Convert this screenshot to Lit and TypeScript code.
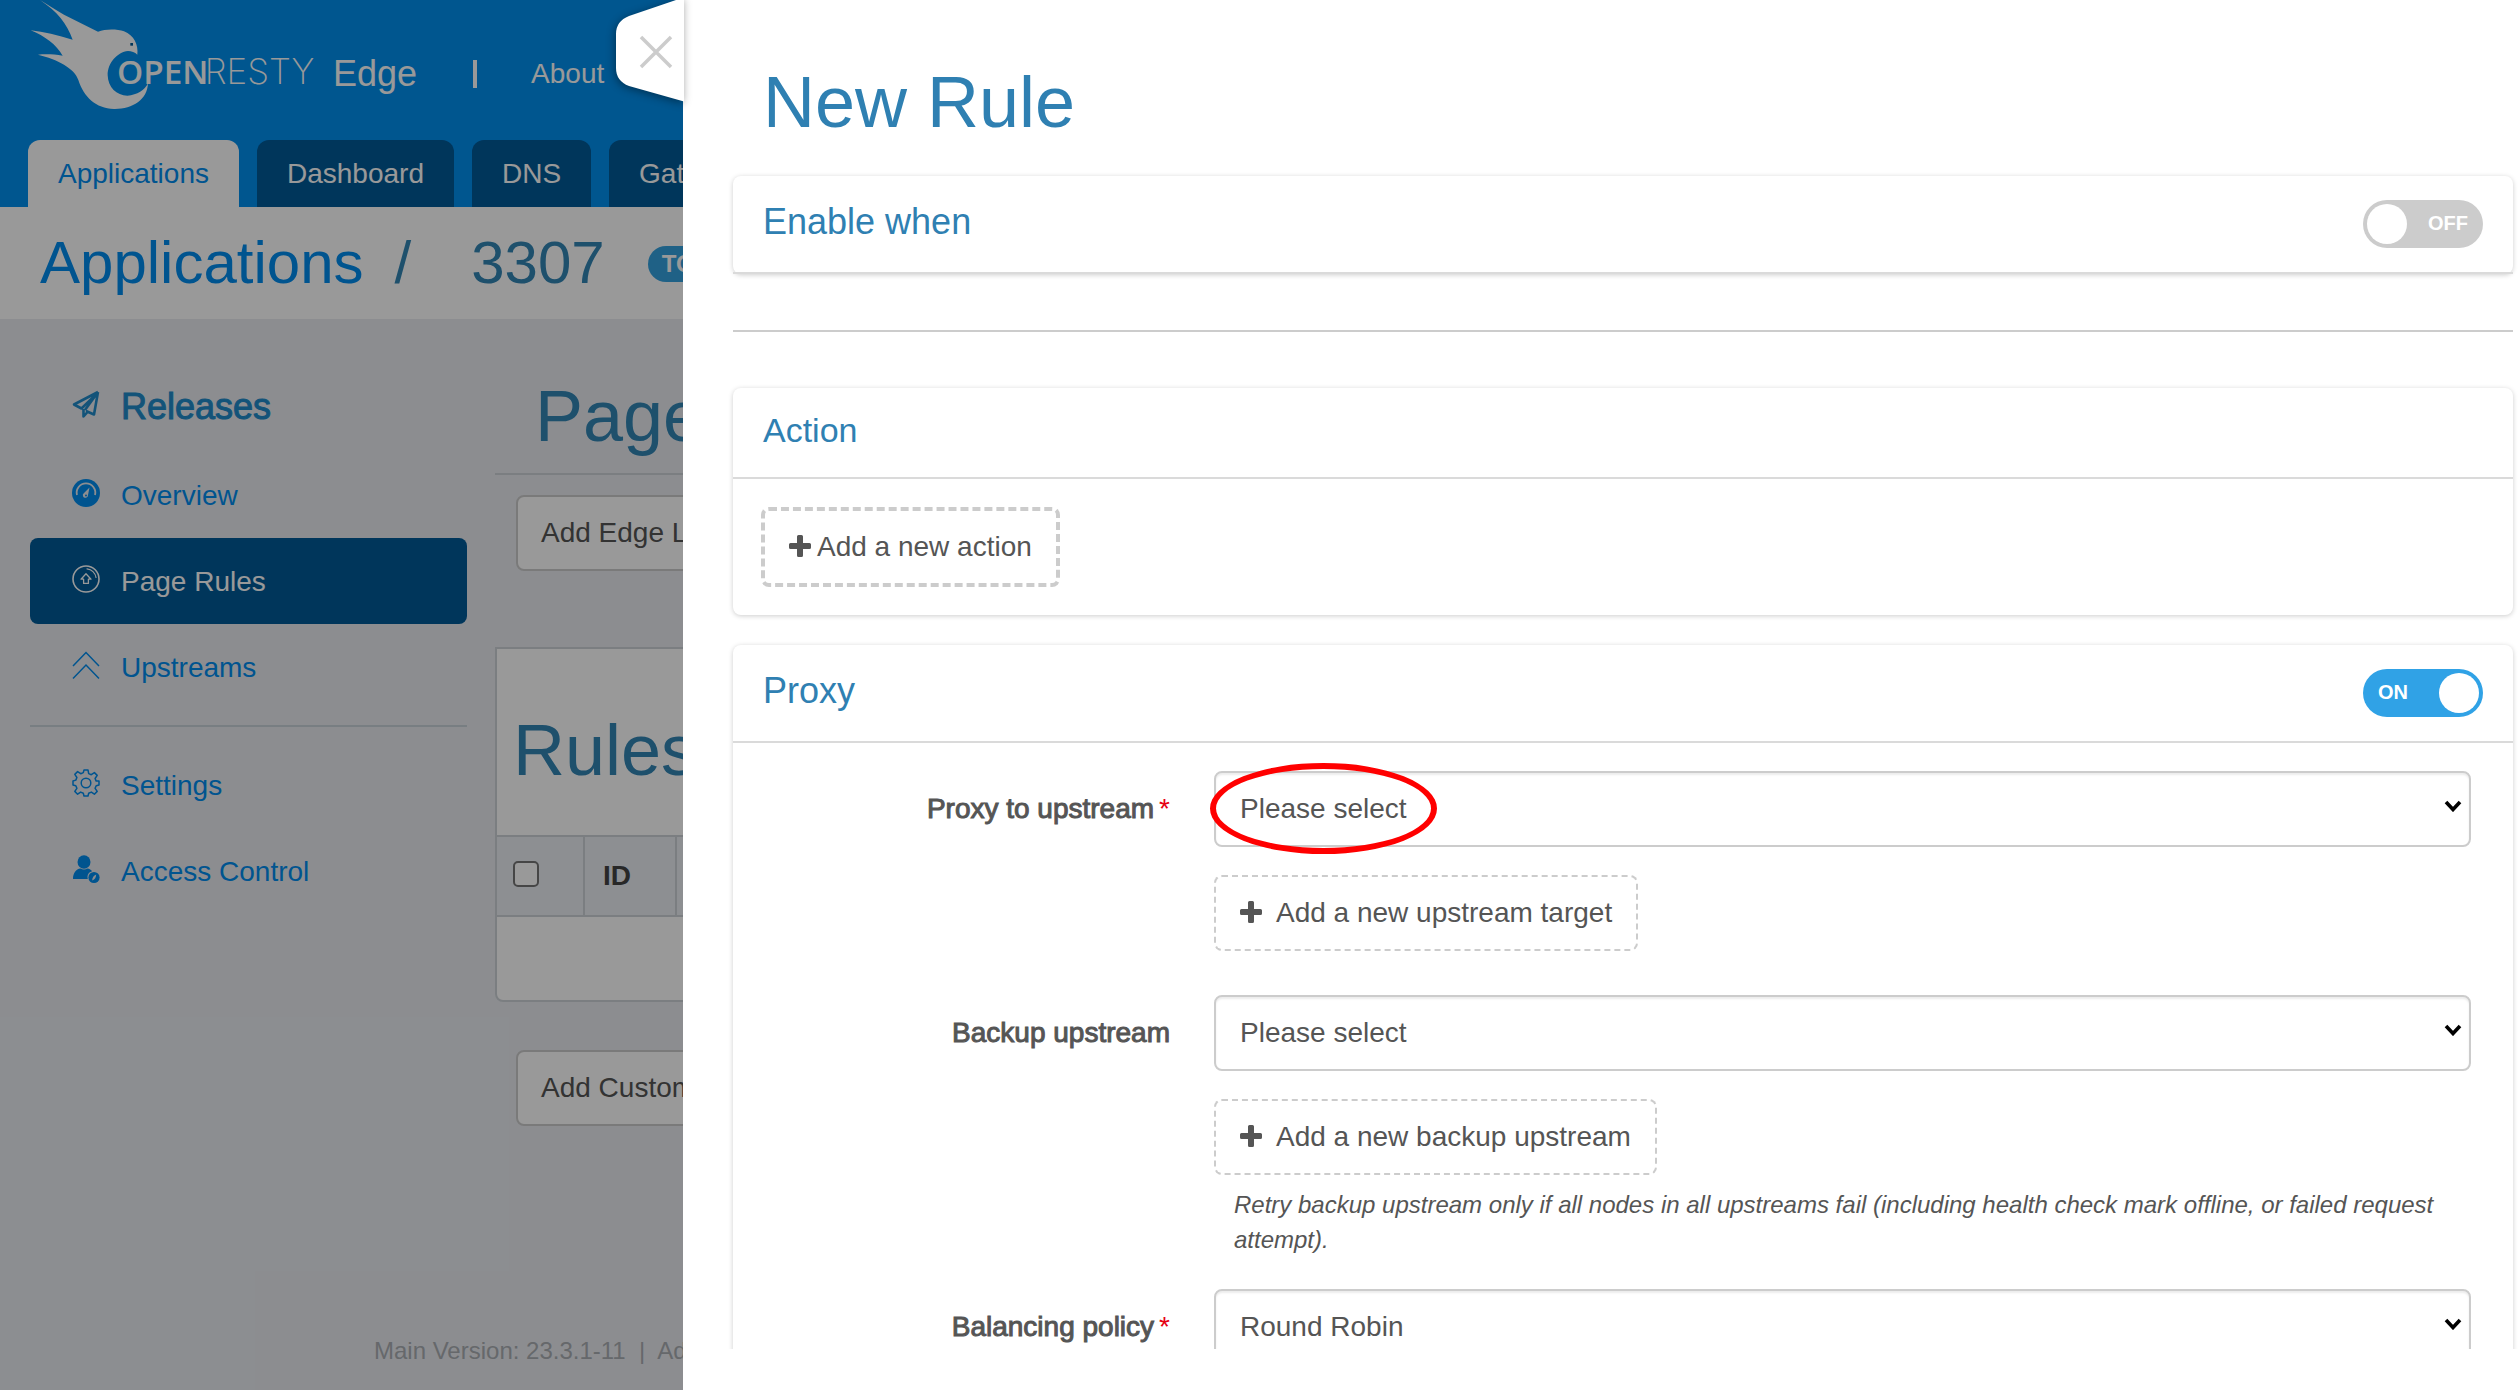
import { LitElement, html, css, svg, nothing, TemplateResult } from "lit";
import { customElement, property } from "lit/decorators.js";

const FONT = css`"Liberation Sans", Arial, Helvetica, sans-serif`;

const icons: Record<string, TemplateResult> = {
  releases: svg`
    <path d="M26 2 2 14.5l7.5 4L23 5.5M26 2l-4 22.5-8-3.5M26 2 13 20M11.5 19v7.5l4.5-5"
      fill="none" stroke="currentColor" stroke-width="2.6" stroke-linejoin="round" />`,
  overview: svg`
    <circle cx="14" cy="14" r="14" fill="currentColor" />
    <path d="M5 16a9.3 9.3 0 1 1 18 0" fill="none" stroke="#e9ecf1" stroke-width="1.8" />
    <path d="M17.5 8.5 12 14a2.6 2.6 0 1 0 4 2z" fill="#e9ecf1" />
    <circle cx="14" cy="16.4" r="1" fill="currentColor" />`,
  rules: svg`
    <g fill="none" stroke="currentColor" stroke-linejoin="round" stroke-linecap="round">
      <circle cx="14" cy="14" r="13" stroke-width="1.6" />
      <path d="M15 3.8A10.2 10.2 0 0 1 24 12.5" stroke-width="1.2" />
      <path d="M14 8.8l5 5.4h-2.6v4.2h-4.8v-4.2H9z" stroke-width="1.3" />
    </g>`,
  upstreams: svg`
    <path d="M1 15 14 1.500 27 15M1 27.500 14 14 27 27.500" fill="none" stroke="currentColor" stroke-width="1.500" />`,
  settings: svg`
    <g fill="none" stroke="currentColor" stroke-width="1.500" stroke-linejoin="round">
      <path d="M12 1h4l.7 3.600 2.600 1.100 3.100-2.100 2.800 2.800-2.100 3.100 1.100 2.600L27 12v4l-2.800.7-1.100 2.600 2.100 3.100-2.800 2.800-3.100-2.100-2.600 1.100L16 27h-4l-.7-2.800-2.600-1.100-3.100 2.100-2.800-2.800 2.100-3.100-1.100-2.600L1 16v-4l2.800-.9 1.100-2.600-2.100-3.100 2.800-2.800 3.100 2.100 2.600-1.100z" />
      <circle cx="14" cy="14" r="4.800" />
    </g>`,
  access: svg`
    <ellipse cx="12" cy="7" rx="6.500" ry="6.800" fill="currentColor" />
    <path d="M1 24c0-6 3-10 7.500-10.500 2 1.400 5 1.400 7 0 2 .3 3.600 1.300 4.600 2.800-3.400.8-5.300 4-4.300 7.700z" fill="currentColor" />
    <circle cx="22" cy="22.500" r="5.600" fill="currentColor" />
    <path d="M20.200 25.500c0-3 1.500-5 4-6-.2 3-1.200 4.800-4 6z" fill="#e9ecf1" />`,
};

const plus = html`<svg class="plus" viewBox="0 0 22 22" aria-hidden="true">
  <path d="M9.500 0h3q1.500 0 1.500 1.500V8h6.500Q22 8 22 9.500v3q0 1.500-1.500 1.500H14v6.500q0 1.500-1.500 1.500h-3Q8 22 8 20.500V14H1.500Q0 14 0 12.500v-3Q0 8 1.500 8H8V1.500Q8 0 9.500 0z" fill="currentColor" />
</svg>`;

@customElement("edge-page")
class EdgePage extends LitElement {
  static styles = css`
    :host {
      display: flex;
      flex-direction: column;
      min-height: 100vh;
      background: #e9ecf1;
      color: #555;
      font: 28px/40px ${FONT};
    }
    * { box-sizing: border-box; }
    a { color: #008cef; text-decoration: none; }
    h1, h2 { margin: 0; font-weight: 400; color: #3285b5; }
    .top { background: #008fee; }
    .brand { display: flex; align-items: center; height: 140px; padding-left: 24px; color: #fff; }
    .logo { width: 300px; height: 115px; align-self: flex-start; }
    .open { font: 600 100px "Open Sans", sans-serif; }
    .resty { font: 200 105px Inter, sans-serif; }
    .product { margin: 8px 0 0 9px; font-size: 36px; }
    .bar { width: 4px; height: 28px; margin: 8px 54px 0 56px; background: #fff; }
    .about { margin-top: 8px; color: #fff; }
    .tabs { display: flex; gap: 18px; padding-left: 28px; overflow: hidden; }
    .tab { padding: 14px 30px 13px; background: #005a98; color: #fff; border-radius: 12px 12px 0 0; white-space: nowrap; }
    .tab.on { background: #fff; color: #008cef; }
    .crumbs { display: flex; align-items: center; height: 112px; padding-left: 40px; background: #fff; font-size: 60px; line-height: 80px; }
    .crumbs h1 { font-size: 60px; }
    .slash { margin: 0 60px 0 31px; color: #3285b5; }
    .badge { margin: 2px 0 0 43px; padding: 0 14px; background: #35a2e0; color: #fff; border-radius: 18px; font-size: 24px; line-height: 36px; font-weight: 700; }
    .columns { display: flex; gap: 28px; }
    .side { width: 467px; padding: 44px 0 0 30px; flex: none; }
    .item { display: flex; align-items: center; gap: 21px; height: 86px; padding: 2px 0 0 42px; border-radius: 8px; }
    .item.lead { margin-bottom: 3px; font-size: 36px; color: #208bca; -webkit-text-stroke: 1px currentColor; }
    .item.on { background: #005a98; color: #fff; }
    .icon { width: 28px; height: 28px; flex: none; margin-bottom: 6px; overflow: visible; }
    .rule { height: 2px; margin: 15px 0; border: 0; background: #c9d2d9; }
    .main { flex: 1; min-width: 0; }
    .heading { padding: 57px 0 17px 40px; border-bottom: 2px solid #cdd3d8; font-size: 72px; line-height: 80px; }
    .btn { height: 76px; padding: 0 23px; background: #fff; color: #555; border: 2px solid #ccc; border-radius: 8px; font: 28px/40px ${FONT}; }
    .first { margin: 20px 0 76px 21px; }
    .last { margin: 48px 0 0 21px; }
    .panel { border: 2px solid #cdd3d8; border-radius: 0 0 8px 8px; background: #fff; }
    .panel-title { padding: 61px 0 45px 16px; font-size: 72px; line-height: 80px; }
    .grid { width: 100%; border-collapse: collapse; table-layout: fixed; }
    .grid th { height: 80px; padding: 0 0 0 18px; background: #ebeef4; border: solid #cdd3d8; border-width: 2px 2px 2px 0; text-align: left; color: #444; }
    .grid th:last-child { border-right: 0; }
    .pick { width: 87px; }
    .num { width: 92px; }
    .grid td { height: 84px; padding: 0; }
    .check { display: block; appearance: none; width: 26px; height: 26px; margin: 0 0 4px -2px; border: 2px solid #767676; border-radius: 5px; background: #fff; }
    .foot { margin-top: auto; padding: 0 0 24px 374px; font-size: 24px; line-height: 30px; color: #aaaeb3; white-space: pre; }
  `;

  private item(name: string, label: string, mod = "") {
    return html`<a class="item ${mod}" href="#">
      <svg class="icon" viewBox="0 0 28 28" aria-hidden="true">${icons[name]}</svg>${label}</a>`;
  }

  render() {
    return html`
      <header class="top">
        <div class="brand">
          <svg class="logo" viewBox="0 0 900 345" role="img" aria-label="OpenResty">
            <path fill="#fff" d="M48 0C70 14 95 30 120 44L222 95C245 86 280 87 300 94C330 106 344 135 340 164C333 157 322 153 312 153C280 156 250 190 251 226C252 262 278 287 310 287C340 285 362 270 372 250C370 300 325 328 270 327C215 325 180 292 163 240C152 205 100 178 42 164C65 162 92 163 116 167C98 135 62 108 20 91C60 96 100 105 146 119C128 70 100 35 48 0Z" />
            <rect x="319" y="129" width="8" height="8" fill="#005a98" />
            <text class="open" x="279" y="252" fill="#fff">OPEN</text>
            <text class="resty" x="542" y="252" fill="#fff">RESTY</text>
          </svg>
          <span class="product">Edge</span>
          <span class="bar"></span>
          <a class="about" href="#">About</a>
        </div>
        <nav class="tabs">
          <a class="tab on" href="#">Applications</a>
          <a class="tab" href="#">Dashboard</a>
          <a class="tab" href="#">DNS</a>
          <a class="tab" href="#">Gateway</a>
        </nav>
      </header>
      <div class="crumbs">
        <a href="#">Applications</a><span class="slash">/</span><h1>3307</h1>
        <span class="badge">TODO</span>
      </div>
      <div class="columns">
        <nav class="side">
          ${this.item("releases", "Releases", "lead")}
          ${this.item("overview", "Overview")}
          ${this.item("rules", "Page Rules", "on")}
          ${this.item("upstreams", "Upstreams")}
          <hr class="rule" />
          ${this.item("settings", "Settings")}
          ${this.item("access", "Access Control")}
        </nav>
        <main class="main">
          <h2 class="heading">Page</h2>
          <button class="btn first">Add Edge Lua</button>
          <section class="panel">
            <h2 class="panel-title">Rules</h2>
            <table class="grid">
              <thead>
                <tr>
                  <th class="pick"><input class="check" type="checkbox" aria-label="Select all rules" /></th>
                  <th class="num">ID</th>
                  <th></th>
                </tr>
              </thead>
              <tbody><tr><td colspan="3"></td></tr></tbody>
            </table>
          </section>
          <button class="btn last">Add Custom</button>
        </main>
      </div>
      <footer class="foot">Main Version: 23.3.1-11  |  Admin</footer>
    `;
  }
}

@customElement("rule-toggle")
class RuleToggle extends LitElement {
  @property({ type: Boolean }) on = false;
  @property() label = "";

  static styles = css`
    .toggle { position: relative; display: block; width: 120px; height: 48px; font: 700 20px/46px ${FONT}; color: #fff; }
    .track { appearance: none; display: flex; justify-content: flex-start; width: 100%; height: 100%; margin: 0; padding: 4px; box-sizing: border-box; border-radius: 24px; background: #ccc; }
    .track::before { content: ""; width: 40px; height: 40px; border-radius: 50%; background: #fff; }
    .track:checked { justify-content: flex-end; background: #30a2e6; }
    .state { position: absolute; top: 0; right: 15px; pointer-events: none; }
    .track:checked + .state { left: 15px; right: auto; }
  `;

  render() {
    return html`<label class="toggle">
      <input class="track" type="checkbox" role="switch" aria-label=${this.label} .checked=${this.on}
        @change=${(e: Event) => (this.on = (e.target as HTMLInputElement).checked)} />
      <span class="state">${this.on ? "ON" : "OFF"}</span>
    </label>`;
  }
}

interface Field {
  id: string;
  label: string;
  value: string;
  required?: boolean;
  marked?: boolean;
  add?: string;
  help?: string;
}

const fields: Field[] = [
  { id: "upstream", label: "Proxy to upstream", value: "Please select", required: true, marked: true, add: "Add a new upstream target" },
  {
    id: "backup", label: "Backup upstream", value: "Please select", add: "Add a new backup upstream",
    help: "Retry backup upstream only if all nodes in all upstreams fail (including health check mark offline, or failed request attempt).",
  },
  { id: "policy", label: "Balancing policy", value: "Round Robin", required: true },
];

@customElement("rule-drawer")
class RuleDrawer extends LitElement {
  static styles = css`
    :host { display: block; background: #fff; color: #555; font: 28px/40px ${FONT}; }
    * { box-sizing: border-box; }
    h1, h2 { margin: 0; font-weight: 400; color: #2f80b2; }
    .close { position: absolute; top: -14px; left: -75px; width: 76px; height: 124px; padding: 0; border: 0; background: none; }
    .close svg { display: block; filter: drop-shadow(-1px 2px 4px rgba(0, 0, 0, 0.4)); }
    .scroll { height: calc(100vh - 41px); padding: 62px 7px 0 50px; overflow: hidden; }
    .title { padding: 0 0 34px 30px; font-size: 72px; line-height: 80px; }
    .card { border-radius: 8px; background: #fff; box-shadow: 0 1px 5px rgba(0, 0, 0, 0.2); }
    .head { display: flex; justify-content: space-between; padding: 24px 30px; border-bottom: 2px solid #dadada; }
    .head.plain { padding: 20px 30px 25px; }
    .name { font-size: 36px; line-height: 44px; }
    .plain .name { font-size: 34px; }
    .rule { height: 2px; margin: 56px 0; border: 0; background: #ccc; }
    .body { padding: 28px; }
    .form { padding: 28px 42px 28px 0; }
    .proxy { margin-top: 30px; }
    button { font: 28px/40px ${FONT}; color: #555; background: #fff; }
    .plus { width: 22px; height: 22px; flex: none; margin-bottom: 2px; }
    .add { display: flex; align-items: center; gap: 14px; height: 76px; margin: 28px 0 12px; padding: 0 24px; border: 2px dashed #ccc; border-radius: 8px; }
    .add.thick { gap: 6px; height: 80px; margin: 0; padding: 0 24px; border-width: 4px; }
    .row { display: grid; grid-template-columns: 437px 1fr; gap: 44px; margin-bottom: 32px; }
    .label { text-align: right; line-height: 76px; -webkit-text-stroke: 1px currentColor; }
    .star { margin-left: 5px; color: #e60012; -webkit-text-stroke: 0; }
    .pick { position: relative; }
    .select { display: block; appearance: none; width: 100%; height: 76px; padding: 0 48px 0 24px; border: 2px solid #ccc; border-radius: 8px; background: #fff; box-shadow: inset 0 2px 2px rgba(0, 0, 0, 0.08); color: #555; font: 28px/40px ${FONT}; }
    .chevron { position: absolute; right: 9px; top: 29px; width: 18px; height: 12px; pointer-events: none; }
    .ring { position: absolute; left: -4px; top: -8px; width: 227px; height: 91px; border: 6px solid #f00; border-radius: 50%; pointer-events: none; }
    .help { margin: 0 0 0 20px; font-size: 24px; line-height: 35px; font-style: italic; }
  `;

  private row(f: Field) {
    return html`<div class="row">
      <label class="label" for=${f.id}>${f.label}${f.required ? html`<span class="star">*</span>` : nothing}</label>
      <div>
        <div class="pick">
          <select class="select" id=${f.id}><option>${f.value}</option></select>
          <svg class="chevron" viewBox="0 0 18 12" aria-hidden="true">
            <path d="M2 2l7 7.500L16 2" fill="none" stroke="#000" stroke-width="3.600" />
          </svg>
          ${f.marked ? html`<span class="ring"></span>` : nothing}
        </div>
        ${f.add ? html`<button class="add">${plus}${f.add}</button>` : nothing}
        ${f.help ? html`<p class="help">${f.help}</p>` : nothing}
      </div>
    </div>`;
  }

  render() {
    return html`
      <button class="close" aria-label="Close">
        <svg width="76" height="124" viewBox="0 -14 76 124">
          <path d="M76-4 68 0 21 16Q8 21 8 34V68Q8 81 21 86L76 101.500z" fill="#fff" />
          <path d="M33 37 63 67M63 37 33 67" stroke="#ccc" stroke-width="3.500" />
        </svg>
      </button>
      <div class="scroll">
        <h1 class="title">New Rule</h1>
        <section class="card">
          <div class="head">
            <h2 class="name">Enable when</h2>
            <rule-toggle label="Enable when"></rule-toggle>
          </div>
        </section>
        <hr class="rule" />
        <section class="card">
          <div class="head plain"><h2 class="name">Action</h2></div>
          <div class="body"><button class="add thick">${plus}Add a new action</button></div>
        </section>
        <section class="card proxy">
          <div class="head">
            <h2 class="name">Proxy</h2>
            <rule-toggle label="Proxy" on></rule-toggle>
          </div>
          <div class="form">${fields.map((f) => this.row(f))}</div>
        </section>
      </div>
    `;
  }
}

@customElement("app-root")
class AppRoot extends LitElement {
  static styles = css`
    :host { display: block; position: relative; height: 100vh; overflow: hidden; }
    .shade { position: absolute; inset: 0; background: rgba(0, 0, 0, 0.4); }
    .drawer { position: absolute; inset: 0 0 0 683px; }
  `;

  render() {
    return html`
      <edge-page></edge-page>
      <div class="shade"></div>
      <rule-drawer class="drawer"></rule-drawer>
    `;
  }
}
